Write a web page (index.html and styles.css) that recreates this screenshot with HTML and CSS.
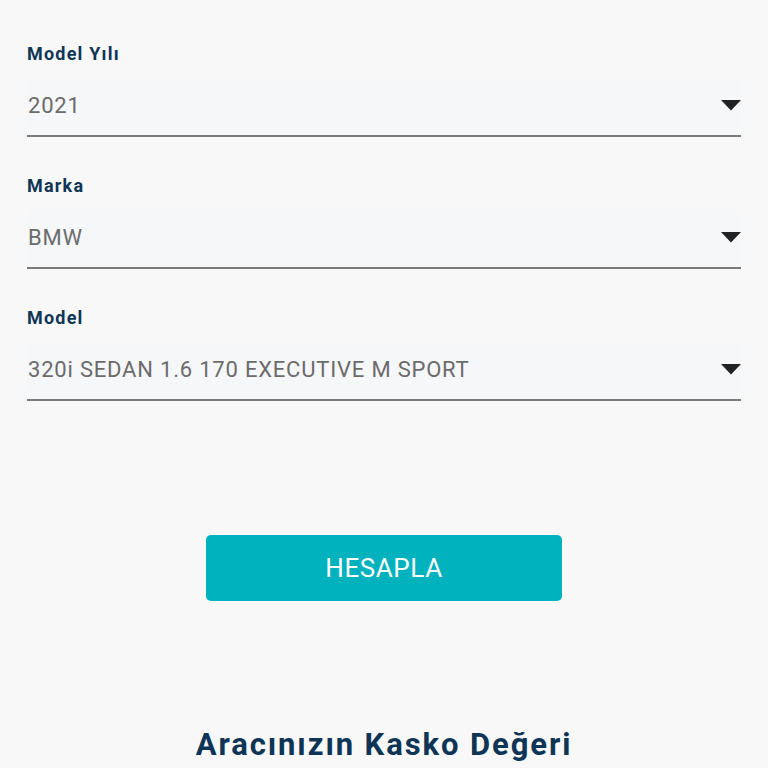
FILE: index.html
```html
<!DOCTYPE html>
<html lang="tr">
<head>
<meta charset="utf-8">
<link rel="stylesheet" href="styles.css">
</head>
<body>
<main class="page">
  <form class="form">
    <div class="field">
      <label class="label">Model Yılı</label>
      <div class="select">
        <span class="value">2021</span>
        <svg class="arrow" width="20" height="11" viewBox="0 0 20 11"><path d="M0 0H20L10 10.5Z" fill="#222"/></svg>
      </div>
    </div>
    <div class="field">
      <label class="label">Marka</label>
      <div class="select">
        <span class="value">BMW</span>
        <svg class="arrow" width="20" height="11" viewBox="0 0 20 11"><path d="M0 0H20L10 10.5Z" fill="#222"/></svg>
      </div>
    </div>
    <div class="field">
      <label class="label">Model</label>
      <div class="select">
        <span class="value">320i SEDAN 1.6 170 EXECUTIVE M SPORT</span>
        <svg class="arrow" width="20" height="11" viewBox="0 0 20 11"><path d="M0 0H20L10 10.5Z" fill="#222"/></svg>
      </div>
    </div>
  </form>
  <div class="actions">
    <button class="btn" type="button">HESAPLA</button>
  </div>
  <h2 class="title">Aracınızın Kasko Değeri</h2>
</main>
</body>
</html>
```
FILE: styles.css
```css
* { box-sizing: border-box; }
html, body {
  margin: 0;
  padding: 0;
  background: #f8f8f8;
  font-family: Roboto, "Liberation Sans", sans-serif;
}
.page {
  padding: 42px 27px 0;
  display: flex;
  flex-direction: column;
}
.form {
  display: flex;
  flex-direction: column;
  gap: 37px;
}
.field {
  display: flex;
  flex-direction: column;
  gap: 12px;
}
.label {
  font-size: 18px;
  line-height: 24px;
  font-weight: 700;
  letter-spacing: 1.2px;
  color: #0f3556;
}
.select {
  height: 59px;
  background: #f6f7f9;
  border-bottom: 2px solid #7a7a7a;
  display: flex;
  align-items: center;
  justify-content: space-between;
  padding: 0 0 3px 1px;
}
.value {
  font-size: 22px;
  color: #6b6b6b;
  letter-spacing: 0.8px;
}
.arrow {
  display: block;
}
.actions {
  display: flex;
  justify-content: center;
  margin-top: 134px;
}
.btn {
  width: 356px;
  height: 66px;
  border: none;
  border-radius: 5px;
  background: #00b2bd;
  color: #fff;
  font-family: Roboto, "Liberation Sans", sans-serif;
  font-size: 26px;
  letter-spacing: 0.6px;
}
.title {
  margin: 126px 0 0;
  text-align: center;
  font-size: 31px;
  line-height: 36px;
  font-weight: 700;
  letter-spacing: 1.9px;
  color: #0f3556;
}
```
